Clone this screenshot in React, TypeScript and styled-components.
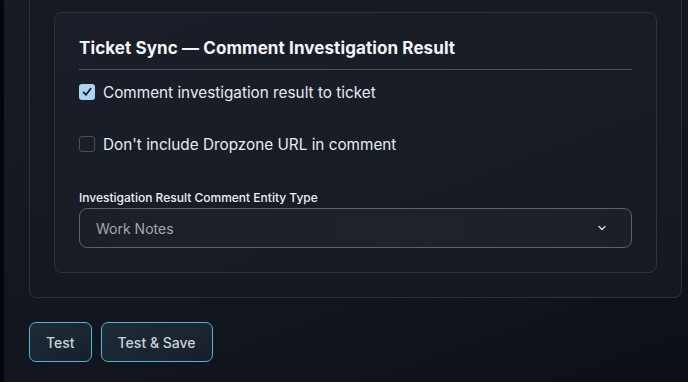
import React, { useState } from 'react';
import styled, { createGlobalStyle } from 'styled-components';

const GlobalStyle = createGlobalStyle`
  html, body {
    margin: 0;
    padding: 0;
    height: 100%;
    background: #0f131a;
    font-family: Inter, "Noto Sans", "Liberation Sans", sans-serif;
  }
  #root {
    height: 100%;
  }
`;

const entityTypes = ['Work Notes', 'Additional Comments'];

const App = () => {
  const [comment, setComment] = useState(true);
  const [hideUrl, setHideUrl] = useState(false);
  const [entity, setEntity] = useState(entityTypes[0]);

  return (
    <>
      <GlobalStyle />
      <Page>
        <SideEdge />
        <Content>
          <OuterCard>
            <Section>
              <SectionTitle>Ticket Sync — Comment Investigation Result</SectionTitle>
              <CheckRow>
                <CheckBox checked={comment} onClick={() => setComment(!comment)}>
                  {comment && (
                    <svg width="12" height="12" viewBox="0 0 12 12">
                      <path d="M2.6 6.4 L5 8.8 L9.6 2.8" fill="none" stroke="#141821" strokeWidth="1.8" strokeLinecap="round" strokeLinejoin="round" />
                    </svg>
                  )}
                </CheckBox>
                <CheckLabel>Comment investigation result to ticket</CheckLabel>
              </CheckRow>
              <CheckRow>
                <CheckBox checked={hideUrl} onClick={() => setHideUrl(!hideUrl)}>
                  {hideUrl && (
                    <svg width="12" height="12" viewBox="0 0 12 12">
                      <path d="M2.6 6.4 L5 8.8 L9.6 2.8" fill="none" stroke="#141821" strokeWidth="1.8" strokeLinecap="round" strokeLinejoin="round" />
                    </svg>
                  )}
                </CheckBox>
                <CheckLabel>Don't include Dropzone URL in comment</CheckLabel>
              </CheckRow>
              <Field>
                <FieldLabel>Investigation Result Comment Entity Type</FieldLabel>
                <SelectBox
                  onClick={() =>
                    setEntity(entityTypes[(entityTypes.indexOf(entity) + 1) % entityTypes.length])
                  }
                >
                  <SelectValue>{entity}</SelectValue>
                  <svg width="10" height="10" viewBox="0 0 10 10">
                    <path d="M2 3.6 L5 6.4 L8 3.6" fill="none" stroke="#d4d8de" strokeWidth="1.4" strokeLinecap="round" strokeLinejoin="round" />
                  </svg>
                </SelectBox>
              </Field>
            </Section>
          </OuterCard>
          <ButtonRow>
            <ActionButton>Test</ActionButton>
            <ActionButton>Test &amp; Save</ActionButton>
          </ButtonRow>
        </Content>
      </Page>
    </>
  );
};

export default App;

// ========== Styled Components ==========

const Page = styled.div`
  display: flex;
  min-height: 382px;
  height: 100%;
  background: linear-gradient(160deg, #171b24 0%, #12161e 55%, #0c1016 100%);
`;

const SideEdge = styled.div`
  width: 4px;
  flex-shrink: 0;
  background: #03060b;
`;

const Content = styled.div`
  flex: 1;
  padding: 0 6px 0 25px;
  display: flex;
  flex-direction: column;
`;

const OuterCard = styled.div`
  border: 1px solid #2b3039;
  border-top: none;
  border-radius: 0 0 8px 8px;
  padding: 12px 24px 24px;
  background: linear-gradient(180deg, #161a23 0%, #141820 100%);
`;

const Section = styled.div`
  border: 1px solid #2e333c;
  border-radius: 8px;
  padding: 24px;
  background: linear-gradient(160deg, #1a1e28 0%, #181c25 60%, #171a22 100%);
`;

const SectionTitle = styled.h3`
  margin: 0;
  padding: 1px 0 11px;
  font-size: 17px;
  line-height: 20px;
  font-weight: 700;
  letter-spacing: 0.1px;
  color: #f3f5f8;
  border-bottom: 1px solid #4a4f59;
`;

const CheckRow = styled.label`
  display: flex;
  align-items: center;
  gap: 8px;
  height: 24px;
  margin: 10px 0 28px;
  cursor: pointer;
`;

const CheckBox = styled.span<{ checked: boolean }>`
  width: 16px;
  height: 16px;
  box-sizing: border-box;
  border-radius: 3px;
  display: flex;
  align-items: center;
  justify-content: center;
  background: ${(p) => (p.checked ? '#a9d3f5' : 'transparent')};
  border: ${(p) => (p.checked ? 'none' : '1.5px solid #4b505a')};
`;

const CheckLabel = styled.span`
  font-size: 15.3px;
  color: #e8ebef;
`;

const Field = styled.div`
  display: flex;
  flex-direction: column;
  gap: 2px;
  margin-top: 34px;
`;

const FieldLabel = styled.span`
  font-size: 12px;
  line-height: 16px;
  font-weight: 500;
  color: #eef0f3;
`;

const SelectBox = styled.div`
  height: 40px;
  box-sizing: border-box;
  border: 1px solid #5c616b;
  border-radius: 8px;
  padding: 0 24px 0 16px;
  display: flex;
  align-items: center;
  justify-content: space-between;
  background: linear-gradient(90deg, #1b1f28 0%, #1e222b 60%, #1b1f27 100%);
  cursor: pointer;
`;

const SelectValue = styled.span`
  font-size: 14px;
  color: #a3a8b1;
`;

const ButtonRow = styled.div`
  display: flex;
  gap: 9px;
  margin-top: 24px;
`;

const ActionButton = styled.button`
  height: 40px;
  padding: 0 16px;
  border: 1px solid #4fb4dc;
  border-radius: 7px;
  background: linear-gradient(160deg, #1d2c38 0%, #172029 100%);
  color: #cdd2da;
  font-family: Inter, "Noto Sans", "Liberation Sans", sans-serif;
  font-size: 14px;
  font-weight: 500;
  cursor: pointer;
`;
